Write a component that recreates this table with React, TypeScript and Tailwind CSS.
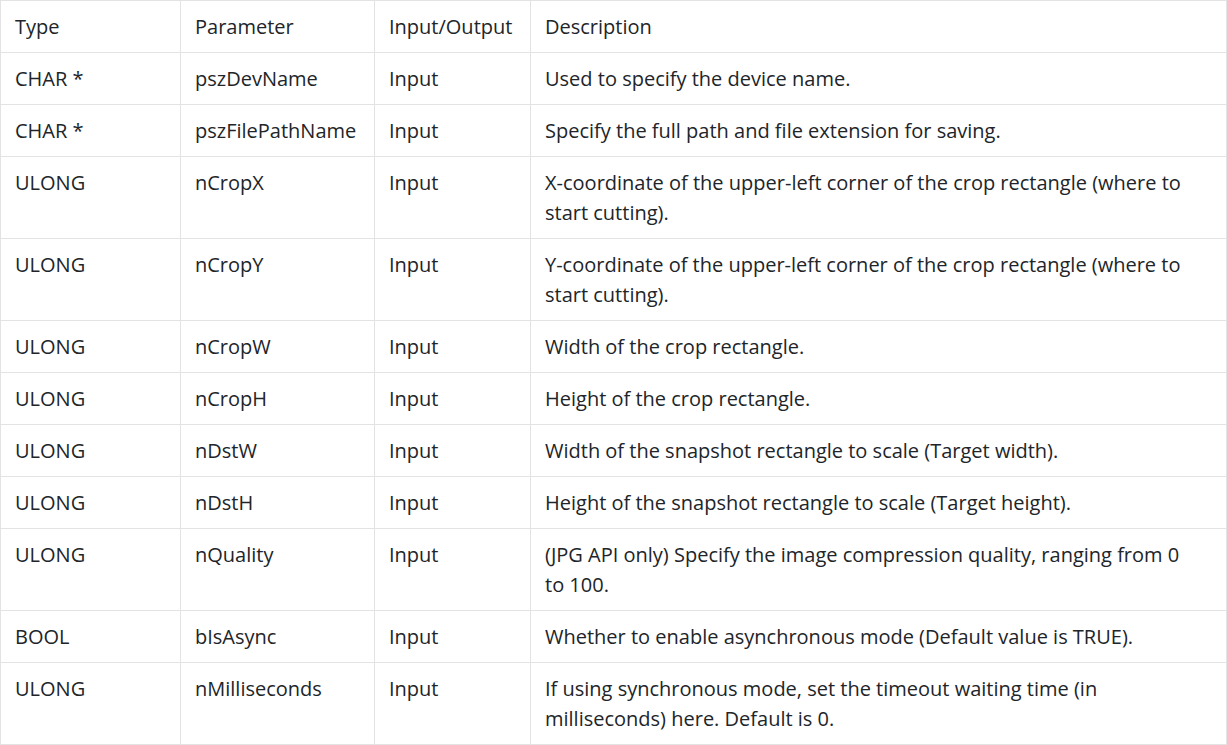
import React from 'react';

const rows: [string, string, string, string][] = [
  ['CHAR *', 'pszDevName', 'Input', 'Used to specify the device name.'],
  ['CHAR *', 'pszFilePathName', 'Input', 'Specify the full path and file extension for saving.'],
  ['ULONG', 'nCropX', 'Input', 'X-coordinate of the upper-left corner of the crop rectangle (where to start cutting).'],
  ['ULONG', 'nCropY', 'Input', 'Y-coordinate of the upper-left corner of the crop rectangle (where to start cutting).'],
  ['ULONG', 'nCropW', 'Input', 'Width of the crop rectangle.'],
  ['ULONG', 'nCropH', 'Input', 'Height of the crop rectangle.'],
  ['ULONG', 'nDstW', 'Input', 'Width of the snapshot rectangle to scale (Target width).'],
  ['ULONG', 'nDstH', 'Input', 'Height of the snapshot rectangle to scale (Target height).'],
  ['ULONG', 'nQuality', 'Input', '(JPG API only) Specify the image compression quality, ranging from 0 to\u00a0100.'],
  ['BOOL', 'bIsAsync', 'Input', 'Whether to enable asynchronous mode (Default value is TRUE).'],
  ['ULONG', 'nMilliseconds', 'Input', 'If using synchronous mode, set the timeout waiting time (in milliseconds) here. Default is 0.'],
];

const cell = 'border border-[#e3e3e3] px-[14px] pt-[11px] pb-[10px] align-top';

const App: React.FC = () => {
  return (
    <div className="bg-white w-[1227px] text-[#212529] font-['Open_Sans',sans-serif] text-[20px] leading-[30px]">
      <table className="w-[1227px] table-fixed border-collapse text-left">
        <colgroup>
          <col className="w-[180px]" />
          <col className="w-[194px]" />
          <col className="w-[156px]" />
          <col />
        </colgroup>
        <thead>
          <tr>
            <th className={`${cell} font-normal`}>Type</th>
            <th className={`${cell} font-normal`}>Parameter</th>
            <th className={`${cell} font-normal`}>Input/Output</th>
            <th className={`${cell} font-normal`}>Description</th>
          </tr>
        </thead>
        <tbody>
          {rows.map((r, i) => (
            <tr key={i}>
              {r.map((c, j) => (
                <td key={j} className={cell}>{c}</td>
              ))}
            </tr>
          ))}
        </tbody>
      </table>
    </div>
  );
};

export default App;
